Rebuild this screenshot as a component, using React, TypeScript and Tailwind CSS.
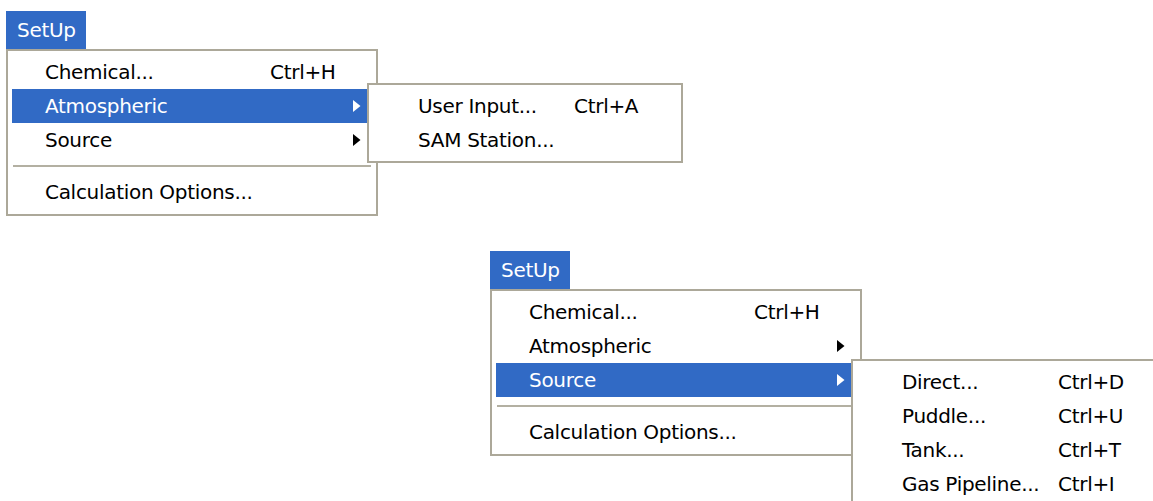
import clsx from "clsx";

type Item = {
  label?: string;
  shortcut?: string;
  arrow?: boolean;
  active?: boolean;
  sep?: boolean;
};

function Arrow({ active }: { active?: boolean }) {
  return (
    <svg width="8" height="12" viewBox="0 0 8 12" className="ml-auto mr-[11px]">
      <path d="M0 0 L7.5 6 L0 12 Z" fill={active ? "#ffffff" : "#000000"} />
    </svg>
  );
}

function Rows({ items, pad, labelW }: { items: Item[]; pad: string; labelW: string }) {
  return (
    <>
      {items.map((it, i) =>
        it.sep ? (
          <div key={i} className="flex h-[18px] items-center px-[1px]">
            <div className="h-[2px] w-full bg-[#b3b0a2]" />
          </div>
        ) : (
          <div
            key={i}
            className={clsx(
              "flex h-[34px] items-center whitespace-nowrap",
              pad,
              it.active ? "bg-[#316ac5] text-white" : "text-black"
            )}
          >
            <span className={clsx("shrink-0", labelW)}>{it.label}</span>
            <span>{it.shortcut}</span>
            {it.arrow && <Arrow active={it.active} />}
          </div>
        )
      )}
    </>
  );
}

function SetupMenu({
  active,
  sub,
  subTop,
}: {
  active: "Atmospheric" | "Source";
  sub: Item[];
  subTop: string;
}) {
  const items: Item[] = [
    { label: "Chemical...", shortcut: "Ctrl+H" },
    { label: "Atmospheric", arrow: true, active: active === "Atmospheric" },
    { label: "Source", arrow: true, active: active === "Source" },
    { sep: true },
    { label: "Calculation Options..." },
  ];
  return (
    <div className="w-[372px]">
      <div className="flex h-[38px] w-[80px] items-center bg-[#316ac5] pl-[11px] text-white">
        SetUp
      </div>
      <div className="relative border-2 border-[#aca899] bg-white px-[4px] pt-[4px] pb-[5px]">
        <Rows items={items} pad="pl-[33px]" labelW="w-[225px]" />
        <div
          className={clsx(
            "absolute left-[359px] w-[316px] border-2 border-[#aca899] bg-white px-[4px] pt-[4px] pb-[4px]",
            subTop
          )}
        >
          <Rows items={sub} pad="pl-[45px]" labelW="w-[156px]" />
        </div>
      </div>
    </div>
  );
}

export default function App() {
  return (
    <div className="relative h-[501px] w-[1153px] overflow-hidden bg-white font-['DejaVu_Sans',sans-serif] text-[20px] leading-none tracking-[-0.3px]">
      <div className="pl-[6px] pt-[11px]">
        <SetupMenu
          active="Atmospheric"
          subTop="top-[32px]"
          sub={[
            { label: "User Input...", shortcut: "Ctrl+A" },
            { label: "SAM Station..." },
          ]}
        />
      </div>
      <div className="pl-[490px] pt-[35px]">
        <SetupMenu
          active="Source"
          subTop="top-[68px]"
          sub={[
            { label: "Direct...", shortcut: "Ctrl+D" },
            { label: "Puddle...", shortcut: "Ctrl+U" },
            { label: "Tank...", shortcut: "Ctrl+T" },
            { label: "Gas Pipeline...", shortcut: "Ctrl+I" },
          ]}
        />
      </div>
    </div>
  );
}
